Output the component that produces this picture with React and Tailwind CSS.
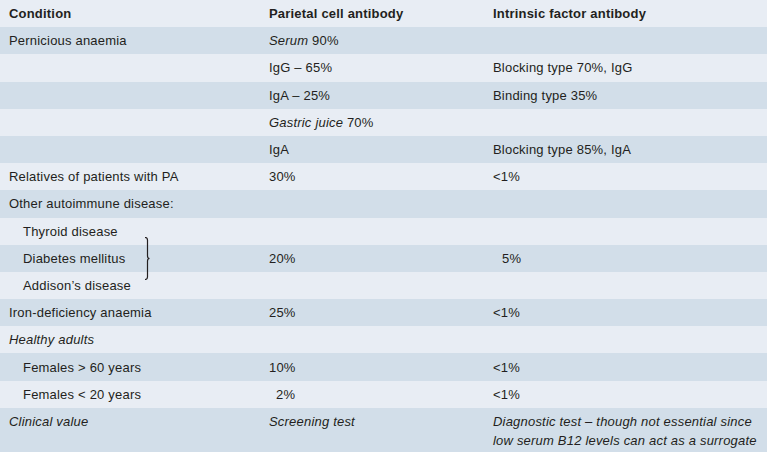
import React from "react";

const L = "bg-[#e8edf4]";
const D = "bg-[#d2dee9]";

function Row({ bg, a, b, c, h = "h-[27.2px]", items = "items-center" }) {
  return (
    <div className={`grid grid-cols-[260px_224px_1fr] ${h} ${bg} ${items} pl-[9px]`}>
      <div>{a}</div>
      <div>{b}</div>
      <div>{c}</div>
    </div>
  );
}

export default function App() {
  return (
    <div
      className="w-[767px] h-[460px] bg-white text-[#231f20] text-[13px] leading-[19px] tracking-[0.2px]"
      style={{ fontFamily: '"Liberation Sans", Arial, sans-serif' }}
    >
      <Row bg={L} a={<b>Condition</b>} b={<b>Parietal cell antibody</b>} c={<b>Intrinsic factor antibody</b>} />
      <Row bg={D} a="Pernicious anaemia" b={<><i>Serum</i> 90%</>} c="" />
      <Row bg={L} a="" b="IgG – 65%" c="Blocking type 70%, IgG" />
      <Row bg={D} a="" b="IgA – 25%" c="Binding type 35%" />
      <Row bg={L} a="" b={<><i>Gastric juice</i> 70%</>} c="" />
      <Row bg={D} a="" b="IgA" c="Blocking type 85%, IgA" />
      <Row bg={L} a="Relatives of patients with PA" b="30%" c="<1%" />
      <Row bg={D} a="Other autoimmune disease:" b="" c="" />
      <div className="relative">
        <Row bg={L} a={<span className="pl-[14px]">Thyroid disease</span>} b="" c="" />
        <Row bg={D} a={<span className="pl-[14px]">Diabetes mellitus</span>} b="20%" c={<span className="pl-[9px]">5%</span>} />
        <Row bg={L} a={<span className="pl-[14px]">Addison’s disease</span>} b="" c="" />
        <svg className="absolute left-[144px] top-[19px]" width="10" height="43" viewBox="0 0 10 43">
          <path d="M1 0.5 Q3.5 0.5 3.5 3 L3.5 19 Q3.5 21.5 5.5 21.5 Q3.5 21.5 3.5 24 L3.5 40 Q3.5 42.5 1 42.5" fill="none" stroke="#231f20" strokeWidth="1.2" />
        </svg>
      </div>
      <Row bg={D} a="Iron-deficiency anaemia" b="25%" c="<1%" />
      <Row bg={L} a={<i>Healthy adults</i>} b="" c="" />
      <Row bg={D} a={<span className="pl-[14px]">Females &gt; 60 years</span>} b="10%" c="<1%" />
      <Row bg={L} a={<span className="pl-[14px]">Females &lt; 20 years</span>} b={<span className="pl-[7px]">2%</span>} c="<1%" />
      <Row
        bg={D}
        h="h-[44px]"
        items="items-start pt-[4px]"
        a={<i>Clinical value</i>}
        b={<i>Screening test</i>}
        c={<i>Diagnostic test – though not essential since<br />low serum B12 levels can act as a surrogate</i>}
      />
    </div>
  );
}
